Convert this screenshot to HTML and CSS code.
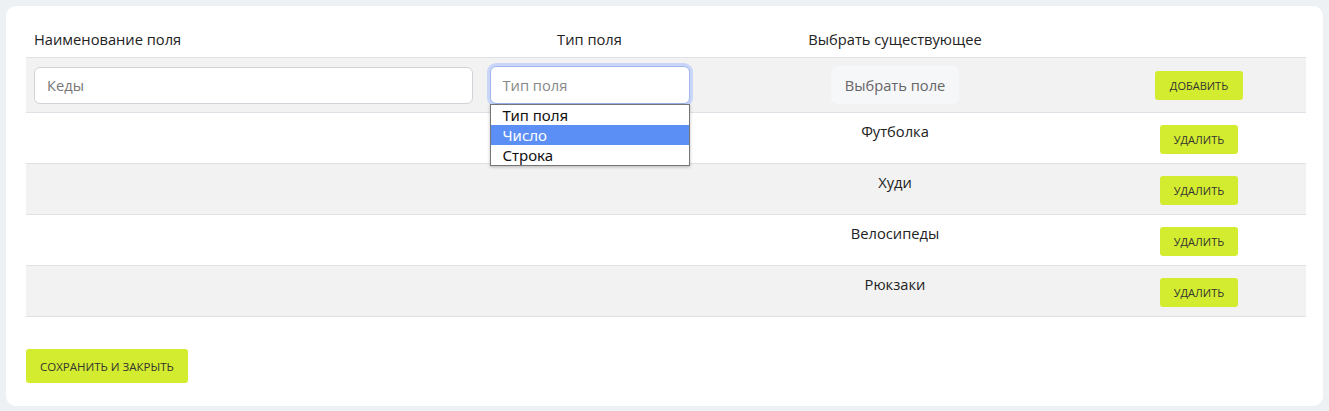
FILE: index.html
```html
<!DOCTYPE html>
<html lang="ru">
<head>
  <meta charset="UTF-8" />
  <meta name="viewport" content="width=device-width, initial-scale=1.0"/>
  <title>Поля категории</title>
  <link rel="stylesheet" href="styles.css">
</head>
<body>
  <div class="fields-card">
    <table class="fields-table">
      <thead>
        <tr>
          <th class="col-name">Наименование поля</th>
          <th class="col-type">Тип поля</th>
          <th class="col-existing">Выбрать существующее</th>
          <th class="col-action"></th>
        </tr>
      </thead>
      <tbody>
        <!-- New field row -->
        <tr class="new-row">
          <td><input type="text" class="field-input" placeholder="Кеды" /></td>
          <td class="center">
            <div class="type-select">
              <div class="select-box">Тип поля</div>
              <!-- open dropdown -->
              <ul class="select-list">
                <li>Тип поля</li>
                <li class="active">Число</li>
                <li>Строка</li>
              </ul>
            </div>
          </td>
          <td class="center"><button class="pick-btn">Выбрать поле</button></td>
          <td class="center"><button class="lime-btn">Добавить</button></td>
        </tr>
        <tr>
          <td></td>
          <td></td>
          <td class="center">Футболка</td>
          <td class="center"><button class="lime-btn small">Удалить</button></td>
        </tr>
        <tr>
          <td></td>
          <td></td>
          <td class="center">Худи</td>
          <td class="center"><button class="lime-btn small">Удалить</button></td>
        </tr>
        <tr>
          <td></td>
          <td></td>
          <td class="center">Велосипеды</td>
          <td class="center"><button class="lime-btn small">Удалить</button></td>
        </tr>
        <tr>
          <td></td>
          <td></td>
          <td class="center">Рюкзаки</td>
          <td class="center"><button class="lime-btn small">Удалить</button></td>
        </tr>
      </tbody>
    </table>

    <div class="card-footer">
      <button class="lime-btn save-btn">Сохранить и закрыть</button>
    </div>
  </div>
</body>
</html>
```

FILE: styles.css
```css
body {
  font-family: 'Open Sans', sans-serif;
  margin: 0;
  padding: 6px;
  background-color: #eef1f4;
  color: #222;
}

.fields-card {
  background-color: white;
  border-radius: 10px;
  padding: 14px 17px 24px 20px;
  height: 362px;
}

.fields-table {
  width: 1280px;
  border-collapse: collapse;
  font-size: 14.7px;
}

.fields-table th {
  font-weight: 400;
  text-align: left;
  padding: 8px 8px 7px;
  height: 22px;
  border-bottom: 1px solid #dee2e6;
}

.col-name { width: 439px; }
.col-type { width: 201px; text-align: center !important; }
.col-existing { width: 378px; text-align: center !important; }
.col-action { width: 198px; }

.fields-table td {
  padding: 8px 8px 0;
  height: 42px;
  vertical-align: top;
  border-bottom: 1px solid #dee2e6;
}

.fields-table tbody tr:nth-child(odd) {
  background-color: #f2f2f2;
}

.fields-table td.center {
  text-align: center;
}

.new-row td {
  height: 38px;
  vertical-align: middle;
  padding: 8px;
}

.field-input {
  box-sizing: border-box;
  width: 439px;
  height: 37px;
  padding: 6px 12px;
  font-family: inherit;
  font-size: 14.7px;
  border: 1px solid #cfd3d7;
  border-radius: 6px;
  background: white;
}

.field-input::placeholder {
  color: #777;
}

.type-select {
  position: relative;
  width: 200px;
  margin: 0 auto;
}

.select-box {
  box-sizing: border-box;
  height: 38px;
  padding: 8px 12px;
  text-align: left;
  color: #888;
  background: white;
  border: 1px solid #9fb6f0;
  border-radius: 6px;
  box-shadow: 0 0 0 3px #c9d6f8;
}

.select-list {
  position: absolute;
  top: 38px;
  left: 0;
  width: 200px;
  box-sizing: border-box;
  margin: 0;
  padding: 0;
  list-style: none;
  text-align: left;
  background: white;
  border: 1px solid #767676;
  box-shadow: 0 1px 3px rgba(0, 0, 0, 0.25);
  font-family: 'Noto Sans', sans-serif;
  font-size: 15px;
  color: #111;
  z-index: 2;
}

.select-list li {
  height: 20px;
  line-height: 20px;
  padding: 0 12px;
}

.select-list li.active {
  background-color: #5b8ff5;
  color: white;
}

.pick-btn {
  height: 38px;
  padding: 0 14px;
  font-family: inherit;
  font-size: 14.7px;
  color: #666;
  background-color: #f6f7f9;
  border: none;
  border-radius: 6px;
}

.lime-btn {
  font-family: inherit;
  font-size: 11px;
  text-transform: uppercase;
  color: #333;
  background-color: #d4ec2f;
  border: none;
  border-radius: 3px;
  height: 29px;
  padding: 0 15px;
}

.lime-btn.small {
  margin-top: 4px;
  padding: 0 14px;
}

.card-footer {
  margin-top: 32px;
}

.save-btn {
  height: 34px;
  padding: 0 14px;
  font-size: 11.5px;
}
```
